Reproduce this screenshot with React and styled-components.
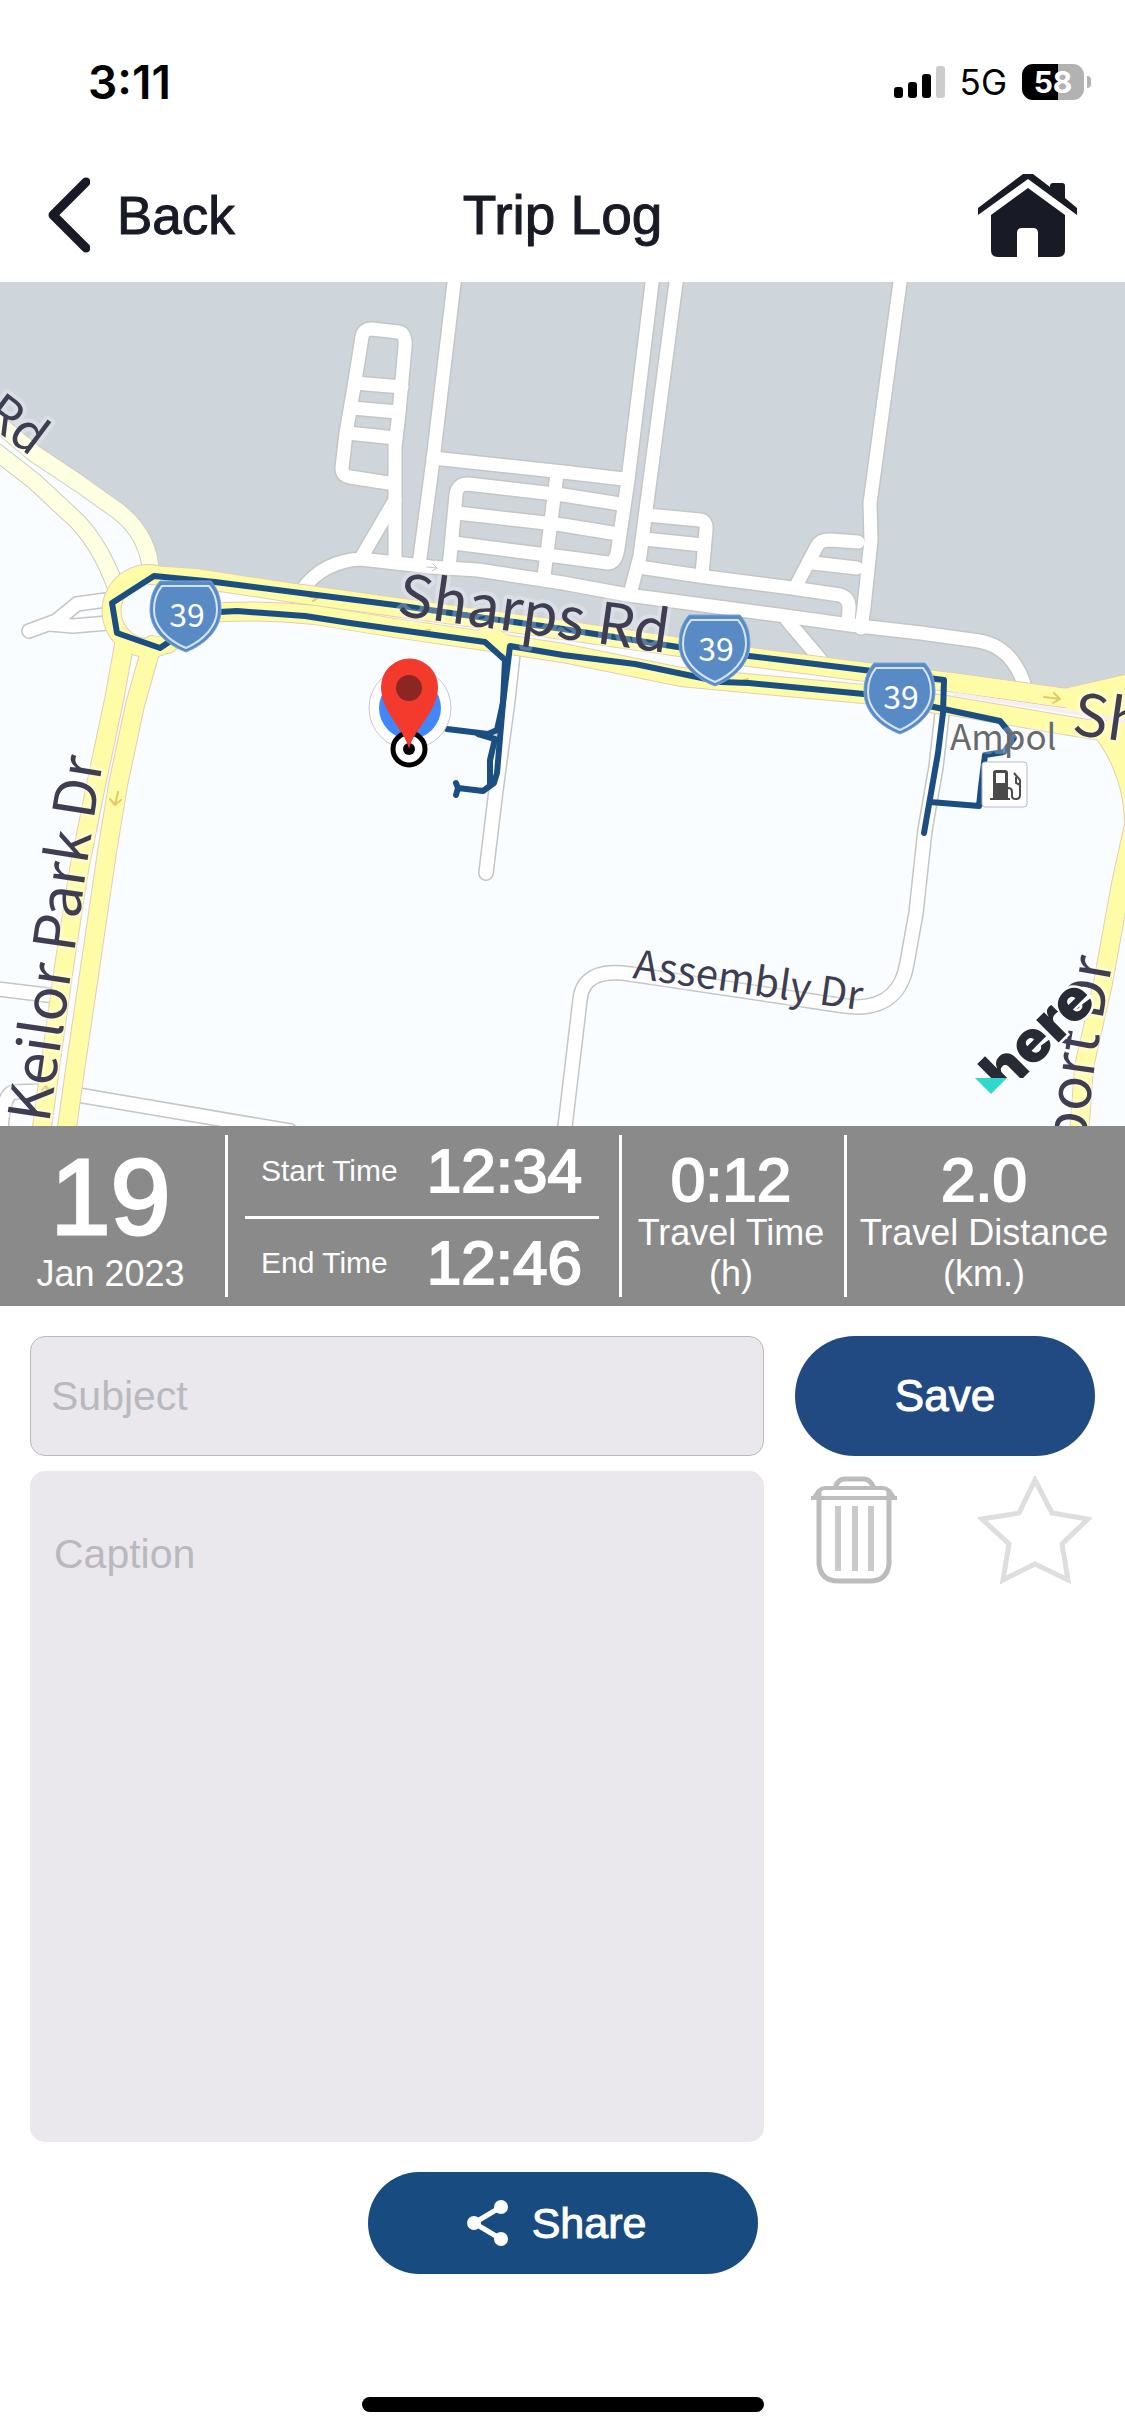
import React, { useState } from 'react'
import styled, { createGlobalStyle, css } from 'styled-components'

const colors = {
  ink: '#181a26',
  bar: '#8a8a8a',
  field: '#eae8ed',
  primary: '#224a82',
  share: '#184c80',
  route: '#1b4f82',
  land: '#fafdff',
  block: '#ced6dc',
  label: '#3f3d52',
}

// white streets inside the grey industrial block and on open land
const streets = [
  'M455 275 L433 460 L419 565',
  'M395 562 L395 447 L399 413 L405 347 Q406 333 398 332 L372 329 Q363 329 362 337 L354 387 L346 433 L342 468 Q342 476 350 477 L395 484',
  'M355 383 L402 387',
  'M352 408 L398 412',
  'M348 433 L395 438',
  'M395 500 L361 558',
  'M302 590 Q323 561 361 559 L431 567 L478 570 L563 583 L628 595 L778 615 L850 625 L921 633 L979 641 Q1014 647 1026 690',
  'M433 458 L563 472 L624 479',
  'M449 568 L456 495 Q457 484 468 484 L563 495 L620 504',
  'M457 513 L563 525 L618 534',
  'M454 543 L563 557 L608 563 Q616 563 618 548 L628 480 L653 275',
  'M557 474 L544 576',
  'M677 275 L646 510 L640 556 L630 594',
  'M647 515 L700 520 Q707 521 706 530 L702 574',
  'M644 539 L703 545',
  'M639 567 L706 577 L792 588 L840 595 Q850 598 849 610 L848 623',
  'M901 275 L870 503 L871 540 L864 607 L861 628',
  'M796 586 L817 546 Q820 540 830 540 L858 542',
  'M813 563 L857 568',
  'M787 620 L826 666',
  'M106 600 L77 604 L56 621 L29 631',
  'M50 624 L73 626 L108 623',
  'M514 645 L508 700 L496 790 L486 873',
  'M943 705 L936 767 L925 830 L916 913 L907 963 Q900 1006 858 1007 L845 1006 L630 974 Q583 967 580 1000 L564 1135',
  'M-10 988 L55 996',
  'M78 1095 L290 1131',
  'M42 1091 L14 1092 Q2 1094 1 1135',
]

const paleRoads = [
  'M-10 417 L35 454 L80 484 L118 511 Q150 536 151 575',
  'M-10 447 L34 481 L77 521 Q100 545 115 585',
]

const mainRoads = [
  'M148 574 A37 37 0 1 0 149 574',
  'M150 575 L195 578 L287 592 L395 607 L563 630 L680 647 L750 657 L850 670 L950 682 L1065 698 L1135 682',
  'M168 644 Q190 612 225 612 Q270 610 315 615 L395 628 L478 640 L563 653 L681 677 L755 684 L864 694 L952 706 L1135 737',
  'M950 682 L1065 698 L1135 710',
  'M487 634 L508 646',
  'M125 640 L114 700 L95 790 L79 870 L65 960 L51 1060 L41 1135',
  'M152 645 L135 705 L118 785 L107 852 L89 975 L75 1070 L66 1135',
  'M1098 725 Q1134 770 1134 825 L1121 884 L1103 983 L1084 1067 L1079 1135',
]

const tripPath = [
  'M172 640 L160 648 L117 633 L112 603 L154 576 L215 582 L395 605 L563 629 L678 647 L749 656 L864 670 L944 680 L943 713 L938 753 L924 833',
  'M930 802 L979 806 L981 787 L985 755 L1004 752 L1014 738 L1000 721 L934 707 L864 694 L749 683 L721 682 L635 664 L563 655 L510 646 L503 703 L497 730 L488 734 L447 729',
  'M219 612 L237 611 L305 616 L350 623 L485 642 L505 660 L503 703 L497 773 L494 783 L483 791 L458 788 L456 783 M458 788 L456 795',
  'M478 734 L495 739 L490 760 L490 783',
]

const Street = ({ d }) => <path d={d} />

const Shield = ({ x, y }) => (
  <g transform={`translate(${x} ${y})`}>
    <path
      d="M10 0 H61 C68 8 71 17 71 29 C71 48 56 63 36 71 C15 63 0 48 0 29 C0 17 3 8 10 0 Z"
      fill="#588bc6"
      stroke="#7ba4d4"
      strokeWidth="1"
    />
    <path
      d="M12 5 H59 C65 12 67 19 67 29 C67 45 54 59 36 67 C17 59 4 45 4 29 C4 19 6 12 12 5 Z"
      fill="none"
      stroke="#d5e2f2"
      strokeWidth="2"
    />
    <ShieldText x="37" y="46">
      39
    </ShieldText>
  </g>
)

const TripMap = () => (
  <MapSvg viewBox="0 282 1125 844" role="img" aria-label="Trip route map">
    <defs>
      <path id="keilor" d="M49 1124 L62 1035 L75 947 L88 857 L107 735" />
      <path id="airport" d="M1068 1300 L1090 1100 L1097 1050 L1113 960" />
      <clipPath id="hereClip">
        <rect x="940" y="940" width="185" height="138" />
      </clipPath>
    </defs>
    <rect y="282" width="1125" height="844" fill={colors.land} />
    <path
      d="M0 282 H1125 V682 L1068 695 L950 675 L700 645 L563 625 L300 590 L150 570 L141 533 L118 511 L80 484 L35 454 L0 425 Z"
      fill={colors.block}
    />

    <Lines stroke="#c3c6c4" width={16}>
      {streets.map(d => <Street key={d} d={d} />)}
    </Lines>
    <Lines stroke="#fff" width={13}>
      {streets.map(d => <Street key={d} d={d} />)}
    </Lines>
    <Lines stroke="#cbcdbf" width={18}>
      {paleRoads.map(d => <Street key={d} d={d} />)}
    </Lines>
    <Lines stroke="#ffffe2" width={16}>
      {paleRoads.map(d => <Street key={d} d={d} />)}
    </Lines>
    <Lines stroke="#e2cdb9" width={20}>
      {mainRoads.map(d => <Street key={d} d={d} />)}
    </Lines>
    <Lines stroke="#fffca8" width={18}>
      {mainRoads.map(d => <Street key={d} d={d} />)}
    </Lines>
    <path d="M1066 689 L1125 676 V722 L1066 709 Z M1100 722 L1125 718 V770 Z" fill="#fffca8" />
    <path d="M953 694 L1040 707 L1125 721" fill="none" stroke="#f6efee" strokeWidth="4" />

    <Lines stroke="#e3c96a" width={2}>
      <path d="M1044 697 L1060 699 M1054 693 L1060 699 L1053 703" />
      <path d="M118 792 L115 805 M110 799 L115 805 L121 800" />
      <path d="M310 597 L318 598 L313 601 M430 630 L423 631 L427 635 M748 679 L742 681 L746 685" />
      <path d="M48 1094 L46 1086 M42 1090 L46 1086 L51 1091" />
    </Lines>
    <Lines stroke="#c4c6c6" width={1}>
      <path d="M427 567 L437 568 M433 564 L437 568 L432 571" />
    </Lines>

    <Lines stroke={colors.route} width={6}>
      {tripPath.map(d => <Street key={d} d={d} />)}
    </Lines>

    <RoadText transform="translate(396 615) rotate(8)">Sharps Rd</RoadText>
    <RoadText transform="translate(1071 734) rotate(8)">Sh</RoadText>
    <RoadText>
      <textPath href="#keilor">Keilor Park Dr</textPath>
    </RoadText>
    <RoadText textAnchor="end">
      <textPath href="#airport" startOffset="100%">
        Airport Dr
      </textPath>
    </RoadText>
    <RoadText transform="translate(31 457) rotate(37)" size={50} textAnchor="end">
      Rd
    </RoadText>
    <RoadText transform="translate(632 978) rotate(8)" size={40}>
      Assembly Dr
    </RoadText>
    <RoadText x="950" y="750" size={35} fill="#6a6a6a">
      Ampol
    </RoadText>

    <Shield x={150} y={581} />
    <Shield x={679} y={615} />
    <Shield x={864} y={663} />

    <rect x="982" y="762" width="45" height="45" rx="3" fill="#fff" stroke="#b9b7cd" />
    <path
      d="M993 798 V773 Q993 770 996 770 H1005 Q1008 770 1008 773 V798 H1010 V800 H990 V798 Z M996 773 V783 H1005 V773 Z"
      fill="#4a4a4a"
      fillRule="evenodd"
    />
    <path
      d="M1008 788 Q1012 788 1012 792 V796 Q1012 799 1016 799 Q1020 799 1020 795 V780 L1014 773 M1016 777 V783 L1020 785"
      fill="none"
      stroke="#4a4a4a"
      strokeWidth="2"
    />

    <circle cx="410" cy="708" r="41" fill="#fff" stroke="#c9c9c9" />
    <circle cx="410" cy="708" r="31" fill="#4186fb" />
    <circle cx="409" cy="749" r="16" fill="#fff" stroke="#000" strokeWidth="5" />
    <circle cx="409" cy="749" r="6" />
    <path
      d="M409 749 C405 730 381 712 381 687 A28 28 0 0 1 438 687 C438 712 413 730 409 749 Z"
      fill="#f4392d"
    />
    <circle cx="409" cy="688" r="13" fill="#8d2623" />

    <path d="M975 1078 H1007 L991 1094 Z" fill="#30d9cc" stroke="#fff" strokeWidth="5" paintOrder="stroke" />
    <g clipPath="url(#hereClip)">
      <LogoText transform="translate(1005 1096) rotate(-45)">here</LogoText>
    </g>
  </MapSvg>
)

const BackIcon = () => (
  <svg width="42" height="76" viewBox="0 0 42 76" fill="none" aria-hidden="true">
    <path
      d="M38 5 L5 38 L38 71"
      stroke={colors.ink}
      strokeWidth="9"
      strokeLinecap="round"
      strokeLinejoin="round"
    />
  </svg>
)

const HomeIcon = () => (
  <svg width="99" height="84" viewBox="0 0 99 84" fill={colors.ink} aria-hidden="true">
    <path d="M0 35 L45 1 H55 L72 14 V13 Q72 10 75 10 H84 Q87 10 87 13 V25 L99 35 V42 L50 6 L0 42 Z" />
    <path d="M13 42 L50 15 L87 42 V77 Q87 84 80 84 H60 V60 Q60 55 55 55 H44 Q39 55 39 60 V84 H20 Q13 84 13 77 Z" />
  </svg>
)

const TrashIcon = () => (
  <svg width="86" height="108" viewBox="0 0 86 108" fill="none" stroke="#bcbcbc" aria-hidden="true">
    <path d="M24 12 Q27 3 33 3 H53 Q59 3 63 12" strokeWidth="5" />
    <path d="M3 22 Q8 12 14 12 H72 Q78 12 83 22" strokeWidth="4" />
    <path d="M0 22 H86" strokeWidth="4" />
    <path d="M8 14 V88 Q10 105 27 105 H59 Q76 105 78 88 V14" strokeWidth="5" />
    <path d="M27 30 V95 M44 30 V95 M60 30 V95" strokeWidth="6" stroke="#cacaca" />
  </svg>
)

const StarIcon = ({ filled }) => (
  <svg width="114" height="109" viewBox="0 0 114 109" aria-hidden="true">
    <path
      d="M57 4 L74 37 L110 43 L84 68 L90 104 L57 88 L25 104 L31 68 L4 43 L41 37 Z"
      fill={filled ? '#dedede' : 'none'}
      stroke="#dedede"
      strokeWidth="5"
    />
  </svg>
)

const ShareIcon = () => (
  <svg width="41" height="46" viewBox="0 0 41 46" fill="#fff" aria-hidden="true">
    <path d="M34 7 L7 23 L34 39" fill="none" stroke="#fff" strokeWidth="5" />
    <circle cx="34" cy="7" r="7" />
    <circle cx="7" cy="23" r="7" />
    <circle cx="34" cy="39" r="7" />
  </svg>
)

const SignalIcon = () => (
  <svg width="51" height="32" viewBox="0 0 51 32" aria-hidden="true">
    <rect y="21" width="9" height="11" rx="3" />
    <rect x="14" y="16" width="9" height="16" rx="3" />
    <rect x="28" y="8" width="9" height="24" rx="3" />
    <rect x="42" width="9" height="32" rx="3" fill="#cccccc" />
  </svg>
)

const App = () => {
  const [starred, setStarred] = useState(false)

  return (
    <Root>
      <GlobalStyle />
      <StatusBar>
        <Clock>3:11</Clock>
        <StatusIcons>
          <SignalIcon />
          <Network>5G</Network>
          <BatteryWrapper>
            <Battery>58</Battery>
            <BatteryTip />
          </BatteryWrapper>
        </StatusIcons>
      </StatusBar>

      <Header>
        <BackButton type="button">
          <BackIcon />
          Back
        </BackButton>
        <Title>Trip Log</Title>
        <HomeButton type="button" aria-label="Home">
          <HomeIcon />
        </HomeButton>
      </Header>

      <TripMap />

      <Stats>
        <Stat>
          <Day>19</Day>
          <StatLabel>Jan 2023</StatLabel>
        </Stat>
        <Times>
          <TimeRow>
            <TimeLabel>Start Time</TimeLabel>
            <Value>12:34</Value>
          </TimeRow>
          <TimeRow>
            <TimeLabel>End Time</TimeLabel>
            <Value>12:46</Value>
          </TimeRow>
        </Times>
        <Stat>
          <Value>0:12</Value>
          <StatLabel>
            Travel Time
            <br />
            (h)
          </StatLabel>
        </Stat>
        <Stat>
          <Value>2.0</Value>
          <StatLabel>
            Travel Distance
            <br />
            (km.)
          </StatLabel>
        </Stat>
      </Stats>

      <Form onSubmit={e => e.preventDefault()}>
        <Subject type="text" placeholder="Subject" aria-label="Subject" />
        <SaveButton type="submit">Save</SaveButton>
        <Caption placeholder="Caption" aria-label="Caption" />
        <Actions>
          <IconButton type="button" aria-label="Delete trip">
            <TrashIcon />
          </IconButton>
          <IconButton
            type="button"
            aria-label="Favourite trip"
            aria-pressed={starred}
            onClick={() => setStarred(!starred)}
          >
            <StarIcon filled={starred} />
          </IconButton>
        </Actions>
      </Form>

      <ShareButton type="button">
        <ShareIcon />
        Share
      </ShareButton>

      <HomeIndicator />
    </Root>
  )
}

const GlobalStyle = createGlobalStyle`
  * {
    box-sizing: border-box;
  }

  body {
    margin: 0;
    background: #fff;
  }

  button,
  input,
  textarea {
    font-family: inherit;
  }
`

// the regular cut thickened to a medium weight
const medium = css`
  -webkit-text-stroke: 1px currentColor;
`

const plainButton = css`
  border: none;
  background: none;
  padding: 0;
  cursor: pointer;
`

const Root = styled.div`
  display: flex;
  flex-direction: column;
  min-height: 100vh;
  background: #fff;
  color: ${colors.ink};
  font-family: 'Liberation Sans', Arial, sans-serif;
`

const StatusBar = styled.div`
  display: flex;
  align-items: center;
  justify-content: space-between;
  height: 148px;
  padding: 16px 34px 0 88px;
  color: #000;
  font-family: Inter, sans-serif;
`

const Clock = styled.span`
  font-size: 46px;
  font-weight: 600;
`

const StatusIcons = styled.div`
  display: flex;
  align-items: center;
  gap: 15px;
`

const Network = styled.span`
  font-size: 35px;
`

const BatteryWrapper = styled.div`
  display: flex;
  align-items: center;
  gap: 3px;
`

const Battery = styled.div`
  width: 62px;
  border-radius: 11px;
  background: linear-gradient(to right, #000 58%, #b2b2b2 58%);
  color: #fff;
  font-size: 30px;
  font-weight: 700;
  line-height: 36px;
  text-align: center;
`

const BatteryTip = styled.div`
  width: 4px;
  height: 12px;
  border-radius: 0 4px 4px 0;
  background: #b2b2b2;
`

const Header = styled.header`
  display: grid;
  grid-template-columns: 1fr auto 1fr;
  align-items: center;
  height: 134px;
  padding: 0 48px;
`

const BackButton = styled.button`
  ${plainButton};
  ${medium};
  display: flex;
  align-items: center;
  gap: 27px;
  justify-self: start;
  color: inherit;
  font-size: 53px;
`

const Title = styled.h1`
  ${medium};
  margin: 0;
  font-size: 55px;
  font-weight: 400;
`

const HomeButton = styled.button`
  ${plainButton};
  display: flex;
  justify-self: end;
`

const MapSvg = styled.svg`
  display: block;
  width: 100%;
  height: auto;
  font-family: 'Noto Sans CJK SC', 'Noto Sans', sans-serif;
`

const Lines = styled.g.attrs(({ width }) => ({ strokeWidth: width, width: undefined }))`
  fill: none;
  stroke-linecap: round;
  stroke-linejoin: round;
`

const RoadText = styled.text.withConfig({
  shouldForwardProp: prop => prop !== 'size',
})`
  fill: ${({ fill }) => fill || colors.label};
  font-size: ${({ size }) => size || 58}px;
  paint-order: stroke;
  stroke: rgba(250, 253, 255, 0.25);
  stroke-width: 8px;
  stroke-linejoin: round;
`

const ShieldText = styled.text`
  fill: #fff;
  font-size: 32px;
  text-anchor: middle;
`

const LogoText = styled.text`
  fill: #272b36;
  font-family: Inter, sans-serif;
  font-size: 58px;
  font-weight: 900;
  paint-order: stroke;
  stroke: #fff;
  stroke-width: 5px;
`

const Stats = styled.section`
  display: grid;
  grid-template-columns: 225fr 394fr 225fr 281fr;
  background: ${colors.bar};
  padding: 9px 0;
  color: #fff;

  > * + * {
    border-left: 3px solid #fff;
  }
`

const Stat = styled.div`
  display: flex;
  flex-direction: column;
  align-items: center;
  justify-content: flex-end;
  min-height: 162px;
  padding: 0 4px 3px 0;
  text-align: center;
  white-space: nowrap;
`

const Day = styled.span`
  font-size: 108px;
  line-height: 112px;
  -webkit-text-stroke: 3px currentColor;
`

const Value = styled.span`
  font-size: 62px;
  line-height: 64px;
  -webkit-text-stroke: 2px currentColor;
`

const StatLabel = styled.span`
  font-size: 36px;
  line-height: 41px;
`

const Times = styled.div`
  display: grid;
  grid-template-rows: 1fr 1fr;
  padding: 0 20px 0 17px;
`

const TimeRow = styled.div`
  display: flex;
  align-items: center;
  justify-content: space-between;
  padding: 0 17px 9px 16px;

  & + & {
    border-top: 3px solid #fff;
    padding: 9px 17px 0 16px;
  }
`

const TimeLabel = styled.span`
  font-size: 30px;
`

const Form = styled.form`
  display: grid;
  grid-template-columns: 734fr 300fr;
  gap: 15px 31px;
  padding: 30px 30px 0;
`

const field = css`
  width: 100%;
  border-radius: 15px;
  background: ${colors.field};
  color: ${colors.ink};
  font-size: 41px;
  outline: none;

  &::placeholder {
    color: #b9b8bd;
    opacity: 1;
  }
`

const Subject = styled.input`
  ${field};
  height: 120px;
  border: 1px solid #b9b8bd;
  padding: 0 20px;
`

const Caption = styled.textarea`
  ${field};
  display: block;
  height: 671px;
  border: none;
  padding: 60px 24px;
  resize: none;
`

const SaveButton = styled.button`
  ${plainButton};
  ${medium};
  height: 120px;
  border-radius: 60px;
  background: ${colors.primary};
  color: #fff;
  font-size: 44px;
`

const Actions = styled.div`
  display: flex;
  align-items: flex-start;
  justify-content: space-between;
  padding: 5px 3px 0 16px;
`

const IconButton = styled.button`
  ${plainButton};
  display: flex;
`

const ShareButton = styled.button`
  ${plainButton};
  ${medium};
  display: flex;
  align-items: center;
  justify-content: center;
  align-self: center;
  gap: 24px;
  width: 390px;
  height: 102px;
  margin-top: 30px;
  padding-right: 12px;
  border-radius: 51px;
  background: ${colors.share};
  color: #fff;
  font-size: 43px;
`

const HomeIndicator = styled.div`
  align-self: center;
  width: 402px;
  height: 15px;
  margin-top: auto;
  margin-bottom: 24px;
  border-radius: 8px;
  background: #000;
`

export default App
